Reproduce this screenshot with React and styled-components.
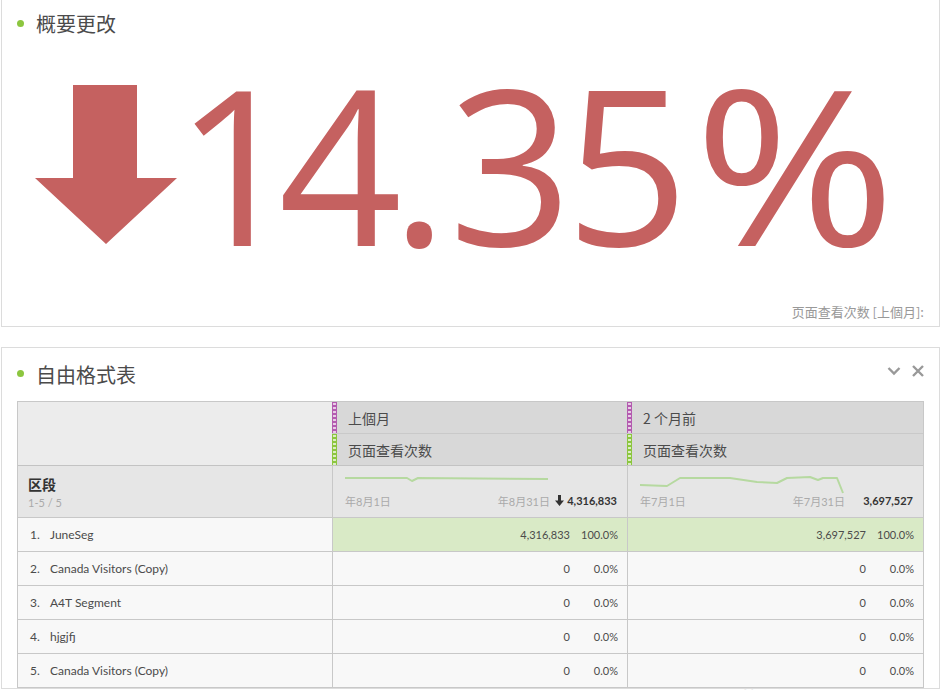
import { Fragment } from "react"
import styled, { createGlobalStyle } from "styled-components"

const GlobalStyle = createGlobalStyle`
  html, body {
    margin: 0;
    padding: 0;
    background: #fff;
    overflow: hidden;
  }
  body {
    font-family: "Lato", "Noto Sans CJK SC", sans-serif;
    color: #4b4b4b;
  }
`

const Page = styled.div`
  position: relative;
  width: 942px;
  height: 690px;
  overflow: hidden;
  box-sizing: border-box;
  padding-left: 1px;
  display: flex;
  flex-direction: column;
  gap: 20px;
`

const Panel = styled.section`
  width: 939px;
  box-sizing: border-box;
  border: 1px solid #dcdcdc;
  border-top: ${(p) => (p.$cut ? "none" : "1px solid #dcdcdc")};
  background: #fff;
  display: flex;
  flex-direction: column;
  flex-shrink: 0;
  height: ${(p) => p.$height || "auto"};
`

const TitleRow = styled.div`
  display: flex;
  align-items: center;
  height: ${(p) => p.$height}px;
  padding: ${(p) => p.$top || 0}px 15px 0 15px;
`

const Dot = styled.span`
  width: 7px;
  height: 7px;
  border-radius: 50%;
  background: #8cc63f;
  margin: -2px 12px 0 0;
`

const Title = styled.h2`
  margin: 0;
  font-family: "Noto Sans CJK SC", sans-serif;
  font-size: 20px;
  font-weight: 400;
  color: #4b4b4b;
  line-height: 28px;
`

const Tools = styled.div`
  margin-left: auto;
  display: flex;
  align-items: center;
  gap: 11px;
  margin-top: -8px;
`

const BigRow = styled.div`
  display: flex;
  align-items: flex-start;
  padding-left: 33px;
  margin-top: 8px;
  height: 225px;
`

const BigArrow = styled.svg`
  flex-shrink: 0;
  margin-top: 39px;
`

const BigValue = styled.div`
  font-family: "Open Sans", sans-serif;
  font-size: 216px;
  line-height: 225px;
  font-weight: 400;
  color: #c56160;
  margin-left: -2px;
  margin-top: 4px;
  white-space: nowrap;
`

const Glyph = styled.span`
  display: inline-block;
  letter-spacing: ${(p) => p.$kern}px;
  transform: scaleX(${(p) => p.$stretch || 1});
  transform-origin: left center;
`

const Footnote = styled.div`
  margin-top: auto;
  padding: 0 15px 5px 0;
  text-align: right;
  font-family: "Noto Sans CJK SC", sans-serif;
  font-size: 13px;
  line-height: 18px;
  color: #999;
`

const TableWrap = styled.div`
  padding: 0 15px;
`

const Table = styled.div`
  display: grid;
  grid-template-columns: 315px 295px 295px;
  border: 1px solid #c8c8c8;
  border-bottom: none;
`

const CornerCell = styled.div`
  grid-row: span 2;
  background: #ececec;
  border-bottom: 1px solid #c3c3c3;
`

const HeadCell = styled.div`
  display: flex;
  align-items: stretch;
  height: 32px;
  box-sizing: border-box;
  background: #d8d8d8;
  border-bottom: 1px solid ${(p) => (p.$last ? "#c3c3c3" : "#c9c9c9")};
  border-right: ${(p) => (p.$edge ? "1px solid #c9c9c9" : "none")};
  margin-left: -1px;
`

const ColorBar = styled.span`
  width: 5px;
  flex-shrink: 0;
  background-color: ${(p) => p.$color};
  background-image: radial-gradient(circle, rgba(255, 255, 255, 0.7) 1.1px, transparent 1.5px);
  background-size: 5px 4px;
  background-repeat: repeat-y;
  background-position: 0 8px;
`

const HeadLabel = styled.span`
  display: flex;
  align-items: center;
  padding-left: 11px;
  font-family: "Noto Sans CJK SC", sans-serif;
  font-size: 14px;
  color: #4b4b4b;
`

const SummaryLead = styled.div`
  height: 52px;
  box-sizing: border-box;
  background: #e6e6e6;
  border-bottom: 1px solid #c8c8c8;
  border-right: 1px solid #c8c8c8;
  padding: 10px 0 0 10px;
`

const SegTitle = styled.div`
  font-family: "Noto Sans CJK SC", sans-serif;
  font-weight: 700;
  font-size: 14px;
  line-height: 17px;
  color: #333;
`

const SegCount = styled.div`
  font-size: 11px;
  line-height: 16px;
  color: #aaa;
  margin-top: 2px;
`

const SummaryCell = styled.div`
  height: 52px;
  box-sizing: border-box;
  background: #e6e6e6;
  border-bottom: 1px solid #c8c8c8;
  border-right: ${(p) => (p.$edge ? "1px solid #c8c8c8" : "none")};
  display: flex;
  padding: 4px 10px 0 12px;
`

const Chart = styled.div`
  width: 205px;
  display: flex;
  flex-direction: column;
`

const ChartLabels = styled.div`
  display: flex;
  justify-content: space-between;
  font-family: "Lato", "Noto Sans CJK SC", sans-serif;
  font-size: 11px;
  line-height: 14px;
  color: #aaa;
  margin-top: ${(p) => p.$gap}px;
`

const Total = styled.div`
  margin-left: auto;
  margin-top: 14px;
  display: flex;
  align-items: center;
  gap: 3px;
  font-size: 11px;
  font-weight: 700;
  line-height: 16px;
  color: #333;
`

const LeadCell = styled.div`
  height: 34px;
  box-sizing: border-box;
  background: #f8f8f8;
  border-bottom: 1px solid #c8c8c8;
  border-right: 1px solid #c8c8c8;
  display: flex;
  align-items: center;
  padding: 0 0 1px 12px;
  font-size: 12px;
`

const Index = styled.span`
  width: 20px;
`

const ValueCell = styled.div`
  height: 34px;
  box-sizing: border-box;
  background: ${(p) => (p.$hit ? "#d9eac6" : "#f8f8f8")};
  border-bottom: 1px solid #c8c8c8;
  border-right: ${(p) => (p.$edge ? "1px solid #c8c8c8" : "none")};
  display: flex;
  align-items: center;
  justify-content: flex-end;
  padding: 0 9px 1px 0;
  font-size: 11px;
  color: #4b4b4b;
`

const Pct = styled.span`
  min-width: 38px;
  margin-left: 10px;
  text-align: right;
`

const Watermark = styled.div`
  position: absolute;
  left: 735px;
  top: 682px;
  font-family: "Noto Sans CJK SC", sans-serif;
  font-size: 24px;
  color: rgba(150, 150, 150, 0.45);
  white-space: nowrap;
`

const rows = [
  { name: "JuneSeg", a: "4,316,833", ap: "100.0%", b: "3,697,527", bp: "100.0%", hit: true },
  { name: "Canada Visitors (Copy)", a: "0", ap: "0.0%", b: "0", bp: "0.0%" },
  { name: "A4T Segment", a: "0", ap: "0.0%", b: "0", bp: "0.0%" },
  { name: "hjgjfj", a: "0", ap: "0.0%", b: "0", bp: "0.0%" },
  { name: "Canada Visitors (Copy)", a: "0", ap: "0.0%", b: "0", bp: "0.0%" },
]

// spacing after each glyph, so the digits sit where the original face put them
const bigGlyphs = [
  ["1", -20],
  ["4", -11],
  [".", 1],
  ["3", -7],
  ["5", 5],
  ["%", 0, 1.13],
]

const Spark = ({ points, height }) => (
  <svg width="205" height={height} viewBox={`0 0 205 ${height}`}>
    <polyline points={points} fill="none" stroke="#b6d9a0" strokeWidth="2" strokeLinejoin="round" />
  </svg>
)

const App = () => {
  return (
    <>
      <GlobalStyle />
      <Page>
        <Panel $cut $height="327px">
          <TitleRow $height={28} $top={10}>
            <Dot />
            <Title>概要更改</Title>
          </TitleRow>
          <BigRow>
            <BigArrow width="142" height="159" viewBox="0 0 142 159">
              <path d="M38 0 H102 V93 H142 L71 159 L0 93 H38 Z" fill="#c56160" />
            </BigArrow>
            <BigValue>
              {bigGlyphs.map(([ch, k, s], i) => (
                <Glyph key={i} $kern={k} $stretch={s}>
                  {ch}
                </Glyph>
              ))}
            </BigValue>
          </BigRow>
          <Footnote>页面查看次数 [上個月]:</Footnote>
        </Panel>

        <Panel>
          <TitleRow $height={53}>
            <Dot />
            <Title>自由格式表</Title>
            <Tools>
              <svg width="14" height="10" viewBox="0 0 14 10">
                <path d="M1.5 2 L7 7.5 L12.5 2" fill="none" stroke="#999" strokeWidth="2.4" />
              </svg>
              <svg width="12" height="12" viewBox="0 0 12 12">
                <path d="M1 1 L11 11 M11 1 L1 11" fill="none" stroke="#999" strokeWidth="2.4" />
              </svg>
            </Tools>
          </TitleRow>
          <TableWrap>
            <Table>
              <CornerCell />
              <HeadCell $edge>
                <ColorBar $color="#b45bb0" />
                <HeadLabel>上個月</HeadLabel>
              </HeadCell>
              <HeadCell>
                <ColorBar $color="#b45bb0" />
                <HeadLabel>2 个月前</HeadLabel>
              </HeadCell>
              <HeadCell $edge $last>
                <ColorBar $color="#8cc63f" />
                <HeadLabel>页面查看次数</HeadLabel>
              </HeadCell>
              <HeadCell $last>
                <ColorBar $color="#8cc63f" />
                <HeadLabel>页面查看次数</HeadLabel>
              </HeadCell>

              <SummaryLead>
                <SegTitle>区段</SegTitle>
                <SegCount>1-5 / 5</SegCount>
              </SummaryLead>
              <SummaryCell $edge>
                <Chart>
                  <Spark height={14} points="0,8 62,8 67,11 73,8 203,9" />
                  <ChartLabels $gap={11}>
                    <span>年8月1日</span>
                    <span>年8月31日</span>
                  </ChartLabels>
                </Chart>
                <Total>
                  <svg width="9" height="11" viewBox="0 0 9 11">
                    <path d="M3 0 H6 V5.5 H9 L4.5 11 L0 5.5 H3 Z" fill="#333" />
                  </svg>
                  4,316,833
                </Total>
              </SummaryCell>
              <SummaryCell>
                <Chart>
                  <Spark height={25} points="0,15 27,16 40,8 90,8 117,12 137,13 147,8 170,7 178,10 183,8 197,8 203,23" />
                  <ChartLabels $gap={0}>
                    <span>年7月1日</span>
                    <span>年7月31日</span>
                  </ChartLabels>
                </Chart>
                <Total>3,697,527</Total>
              </SummaryCell>

              {rows.map((r, i) => (
                <Fragment key={i}>
                  <LeadCell>
                    <Index>{i + 1}.</Index>
                    {r.name}
                  </LeadCell>
                  <ValueCell $edge $hit={r.hit}>
                    {r.a}
                    <Pct>{r.ap}</Pct>
                  </ValueCell>
                  <ValueCell $hit={r.hit}>
                    {r.b}
                    <Pct>{r.bp}</Pct>
                  </ValueCell>
                </Fragment>
              ))}
            </Table>
          </TableWrap>
        </Panel>
        <Watermark>激活 Windows</Watermark>
      </Page>
    </>
  )
}

export default App
